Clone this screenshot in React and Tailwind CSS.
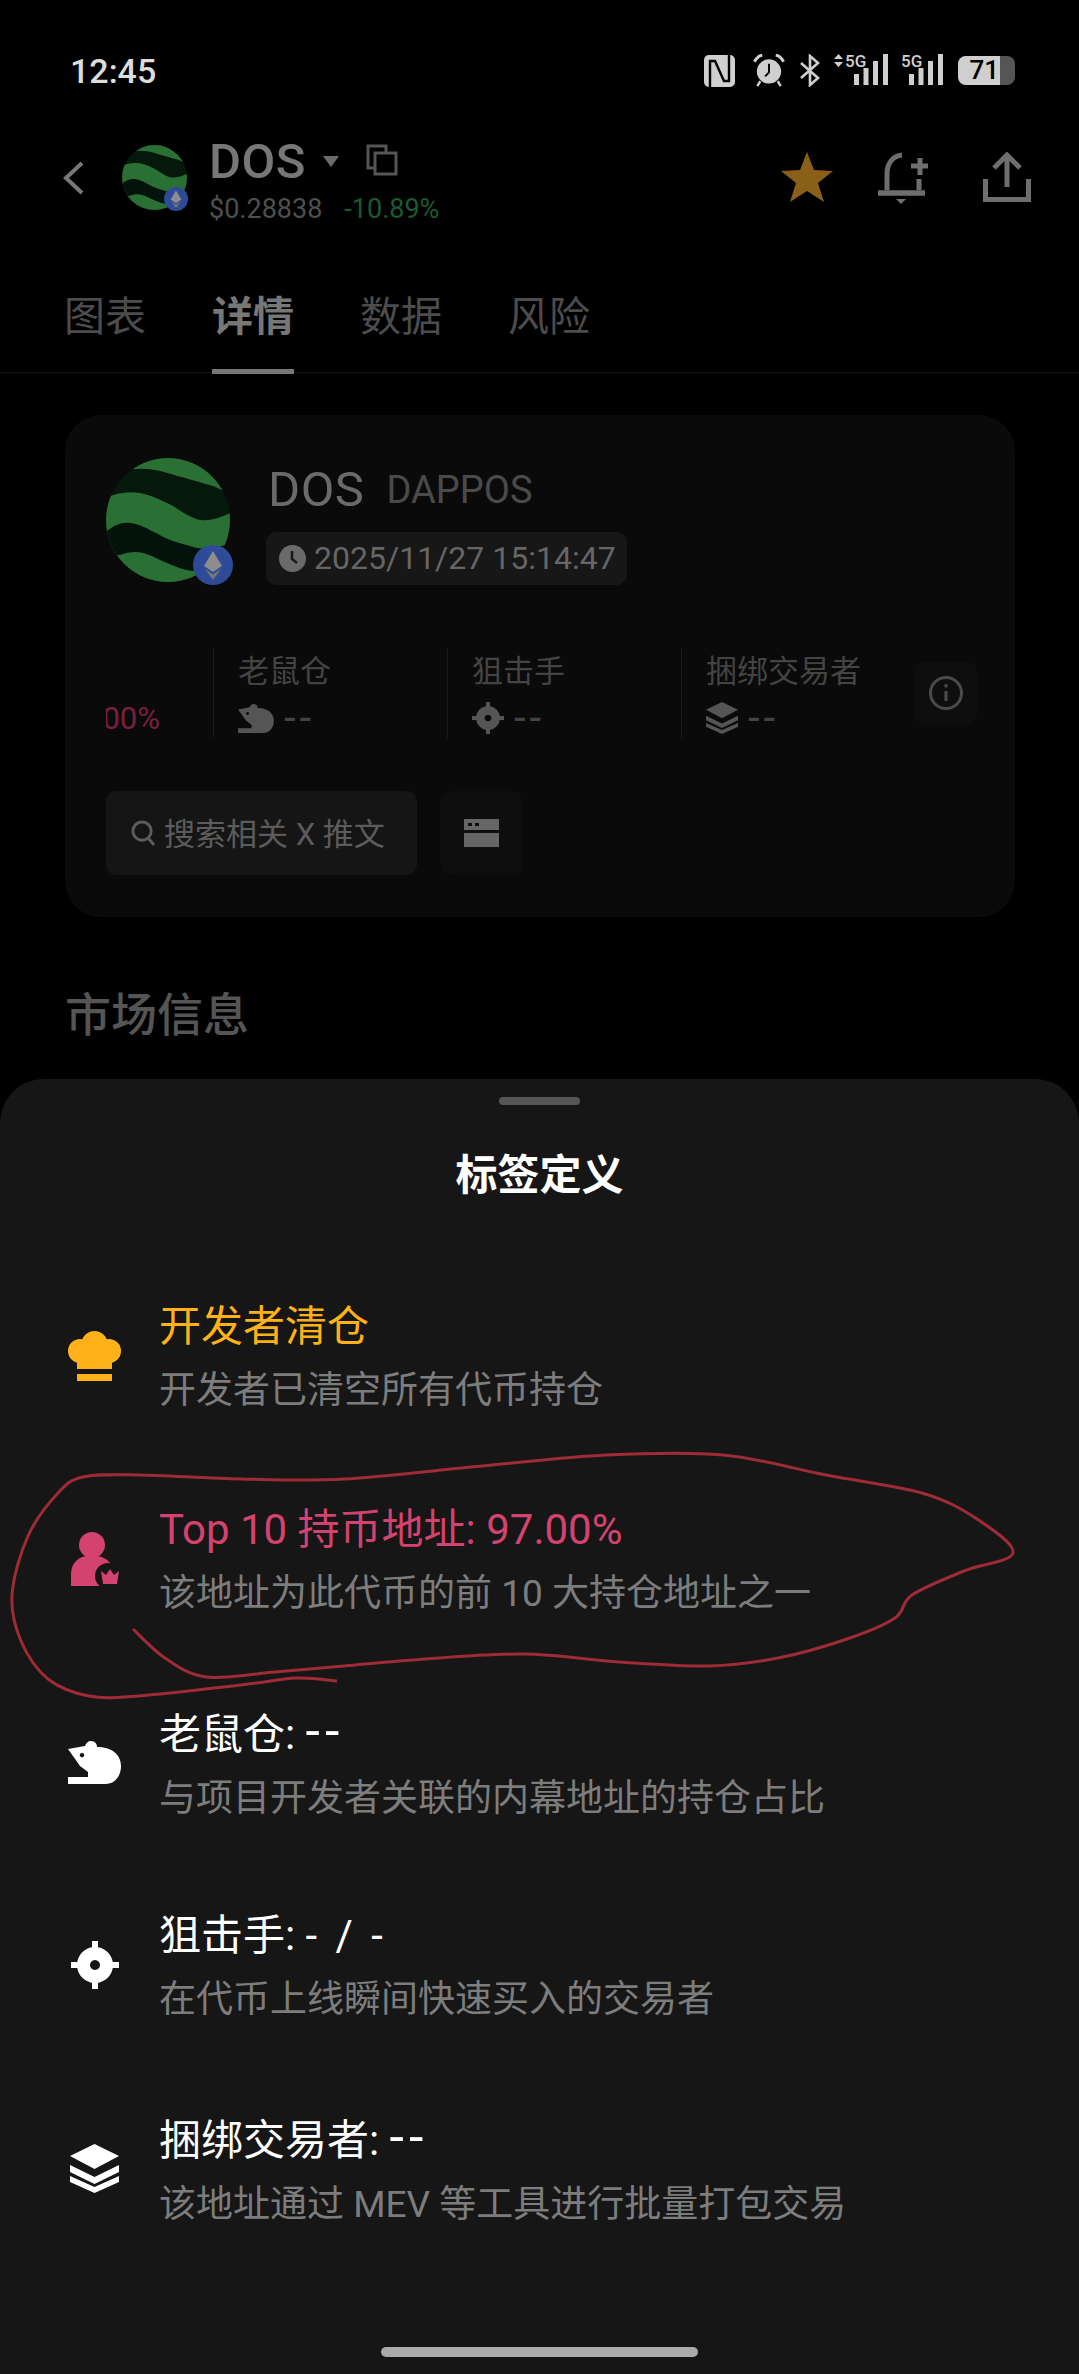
const font = { fontFamily: 'Roboto, "Noto Sans CJK SC", sans-serif' }

// the hand drawn red outline round the second row
const scribble = [
  [133, 1629], [165, 1658], [206, 1677], [275, 1672], [344, 1666], [413, 1660], [523, 1654], [619, 1662],
  [709, 1666], [778, 1658], [847, 1639], [895, 1618], [912, 1595], [964, 1571], [1013, 1553], [977, 1519],
  [922, 1493], [826, 1475], [723, 1455], [606, 1455], [482, 1466], [344, 1479], [241, 1479], [138, 1475],
  [83, 1477], [58, 1493], [28, 1536], [12, 1595], [21, 1641], [48, 1679], [89, 1696], [138, 1696],
  [241, 1685], [296, 1678], [337, 1681],
]

function smoothPath(pts) {
  let d = `M${pts[0][0]} ${pts[0][1]}`
  for (let i = 0; i < pts.length - 1; i++) {
    const p0 = pts[i - 1] || pts[i]
    const p1 = pts[i]
    const p2 = pts[i + 1]
    const p3 = pts[i + 2] || p2
    const c1 = [p1[0] + (p2[0] - p0[0]) / 6, p1[1] + (p2[1] - p0[1]) / 6]
    const c2 = [p2[0] - (p3[0] - p1[0]) / 6, p2[1] - (p3[1] - p1[1]) / 6]
    d += ` C${c1[0]} ${c1[1]} ${c2[0]} ${c2[1]} ${p2[0]} ${p2[1]}`
  }
  return d
}

function TokenLogo({ className }) {
  return (
    <svg viewBox="0 0 124 124" className={className}>
      <defs>
        <clipPath id="logo-clip"><circle cx="62" cy="62" r="62" /></clipPath>
      </defs>
      <g clipPath="url(#logo-clip)">
        <rect width="124" height="124" fill="#05180b" />
        <path d="M0 0H124V36C116 32 110 29 107 28C92 24 80 20 71 18C55 12 35 8 17 13L0 22Z" fill="#2a7034" />
        <path d="M0 40C10 35 22 33 34 35C46 37 57 43 67 48C76 54 85 60 94 62C104 63 114 60 124 55V124H0Z" fill="#2a7034" />
        <path d="M0 74C8 67 16 64 24 65C34 66 42 71 50 75C60 81 72 85 84 88C96 92 108 92 124 85V124H0Z" fill="#03120a" />
        <path d="M0 124V100C5 97 10 97 14 97C22 94 30 93 37 95C46 97 53 102 61 105C70 109 78 112 87 113C95 113 110 110 124 105V124Z" fill="#2a7034" />
      </g>
    </svg>
  )
}

function EthBadge({ className }) {
  return (
    <svg viewBox="0 0 40 40" className={className}>
      <circle cx="20" cy="20" r="20" fill="#2f4a96" />
      <path d="M20 6L29 21L20 27L11 21Z" fill="#8d8d8d" />
      <path d="M20 29.5L28 24L20 35L12 24Z" fill="#777" />
    </svg>
  )
}

function ChefIcon({ className }) {
  return (
    <svg viewBox="0 0 53 50" className={className} fill="currentColor">
      <circle cx="26.5" cy="13" r="13" />
      <circle cx="12" cy="20" r="12" />
      <circle cx="41" cy="20" r="12" />
      <rect x="9" y="14" width="35" height="24" />
      <rect x="9" y="43" width="35" height="7" />
    </svg>
  )
}

function PersonCrownIcon({ className }) {
  return (
    <svg viewBox="0 0 48 54" className={className} fill="currentColor">
      <circle cx="21" cy="13" r="13" />
      <path d="M0 54V42C0 31 8 24 17 24H24C31 24 36 27 40 32V54Z" />
      <circle cx="37" cy="44" r="13" fill="#161616" />
      <path d="M30 39L35 43L39 37L43 43L48 39L46 52H32Z" />
    </svg>
  )
}

function MouseIcon({ className }) {
  return (
    <svg viewBox="0 0 53 43" className={className} fill="currentColor">
      <path fillRule="evenodd" d="M0 8L17 5C18 2 20 0 23 0C27 0 29 3 29 6C43 6 53 13 53 25C53 36 46 43 38 43H0V36H20V31L12 25ZM14 12a2.2 2.2 0 1 0 0.01 0Z" />
    </svg>
  )
}

function TargetIcon({ className }) {
  return (
    <svg viewBox="0 0 48 48" className={className} fill="currentColor">
      <path fillRule="evenodd" d="M24 6a18 18 0 1 0 0.01 0ZM24 19a5 5 0 1 1-0.01 0Z" />
      <rect x="21" y="0" width="6" height="10" />
      <rect x="21" y="38" width="6" height="10" />
      <rect x="0" y="21" width="10" height="6" />
      <rect x="38" y="21" width="10" height="6" />
    </svg>
  )
}

function StackIcon({ className }) {
  return (
    <svg viewBox="0 0 49 49" className={className} fill="currentColor">
      <path d="M24.5 0L49 12L24.5 25L0 12Z" />
      <path d="M0 21L24.5 33L49 21V28L24.5 40L0 28Z" />
      <path d="M0 32L24.5 43L49 32V38L24.5 49L0 38Z" />
    </svg>
  )
}

function SignalBars({ className }) {
  return (
    <svg viewBox="0 0 34 31" className={className} fill="#cfcfcf">
      <rect x="0" y="20" width="5" height="11" />
      <rect x="9.5" y="14" width="5" height="17" />
      <rect x="19" y="7" width="5" height="24" />
      <rect x="29" y="0" width="5" height="31" />
    </svg>
  )
}

function StatusBar() {
  return (
    <div className="h-[142px] pt-[54px] pl-[70px] pr-[64px] flex justify-between items-start">
      <span className="text-[34px] leading-[34px] font-medium text-[#dcdcdc]">12:45</span>
      <div className="flex items-start h-[34px]">
        <svg viewBox="0 0 31 32" className="w-[31px] h-[32px] mt-[1px]">
          <rect width="31" height="32" rx="5" fill="#cfcfcf" />
          <path d="M6 32V6H11L20 26H25V0" stroke="#000" strokeWidth="2.4" fill="none" />
        </svg>
        <svg viewBox="0 0 32 34" className="w-[32px] h-[33px] ml-[18px]">
          <circle cx="16" cy="18" r="12.5" fill="#cfcfcf" />
          <path d="M16 10V19L12 23" stroke="#000" strokeWidth="2" fill="none" />
          <path d="M1 8C3 4 5 2 9 1M31 8C29 4 27 2 23 1" stroke="#cfcfcf" strokeWidth="3" fill="none" />
          <path d="M7 28L4 33M25 28L28 33" stroke="#cfcfcf" strokeWidth="2.5" />
        </svg>
        <svg viewBox="0 0 21 33" className="w-[21px] h-[33px] ml-[15px]">
          <path d="M1 9L18 24L10 31V2L18 9L1 24" stroke="#cfcfcf" strokeWidth="2.6" fill="none" />
        </svg>
        <div className="relative w-[54px] h-[32px] ml-[13px]">
          <svg viewBox="0 0 9 13" className="absolute left-0 top-0 w-[9px] h-[13px]" fill="#cfcfcf">
            <path d="M4.5 0L9 5H0ZM0 8H9L4.5 13Z" />
          </svg>
          <span className="absolute left-[11px] -top-[1px] text-[17px] leading-[16px] font-medium text-[#cfcfcf]">5G</span>
          <SignalBars className="absolute left-[20px] top-0 w-[34px] h-[31px]" />
        </div>
        <div className="relative w-[42px] h-[32px] ml-[13px]">
          <span className="absolute left-0 -top-[1px] text-[17px] leading-[16px] font-medium text-[#cfcfcf]">5G</span>
          <SignalBars className="absolute left-[8px] top-0 w-[34px] h-[31px]" />
        </div>
        <div className="w-[57px] h-[29px] ml-[15px] mt-[2px] rounded-[8px] overflow-hidden flex bg-[#555]">
          <div className="w-[42px] h-full bg-[#cfcfcf] flex justify-end items-center pr-[1px]">
            <span className="text-[26px] leading-[29px] font-medium text-black">71</span>
          </div>
        </div>
      </div>
    </div>
  )
}

function Header() {
  return (
    <div className="h-[150px] flex items-start pl-[63px] pr-[48px]">
      <svg viewBox="0 0 21 34" className="w-[21px] h-[34px] mt-[19px]">
        <path d="M19 2L3 17L19 32" stroke="#777" strokeWidth="4" fill="none" />
      </svg>
      <div className="relative w-[65px] h-[65px] ml-[38px] mt-[3px]">
        <TokenLogo className="w-[65px] h-[65px]" />
        <EthBadge className="absolute -right-[1px] -bottom-[1px] w-[24px] h-[24px]" />
      </div>
      <div className="ml-[22px]">
        <div className="flex items-center h-[46px] -mt-[3px]">
          <span className="text-[49px] leading-[46px] font-medium tracking-[0.5px] text-[#777]">DOS</span>
          <svg viewBox="0 0 16 11" className="w-[16px] h-[11px] ml-[17px] -mt-[2px]"><path d="M0 0H16L8 11Z" fill="#6c6c6c" /></svg>
          <svg viewBox="0 0 32 32" className="w-[32px] h-[32px] ml-[27px] -mt-[4px]" fill="none" stroke="#555" strokeWidth="3">
            <path d="M20 8V2H2V24H9" />
            <rect x="9" y="9" width="21" height="21" />
          </svg>
        </div>
        <div className="flex mt-[7px] text-[27px] leading-[34px]">
          <span className="text-[#4f4f4f]">$0.28838</span>
          <span className="ml-[22px] text-[#1b5a31]">-10.89%</span>
        </div>
      </div>
      <div className="ml-auto flex items-start mt-[10px]">
        <svg viewBox="0 0 52 50" className="w-[52px] h-[50px]"><path d="M26 0L33 18L52 19L37 31L43 50L26 39L9 50L15 31L0 19L19 18Z" fill="#8a5f17" /></svg>
        <svg viewBox="0 0 50 53" className="w-[50px] h-[53px] ml-[45px]" fill="none" stroke="#6e6e6e" strokeWidth="5">
          <path d="M9 38V22C9 11 15 4 24 3" />
          <path d="M41 27V38" />
          <path d="M0 41H47" strokeWidth="5.5" />
          <path d="M42 6V23M33 14H50" />
          <path d="M18 47H28L23 52Z" fill="#6e6e6e" stroke="none" />
        </svg>
        <svg viewBox="0 0 48 50" className="w-[48px] h-[50px] ml-[55px]" fill="none" stroke="#6e6e6e" strokeWidth="5">
          <path d="M24 3V35M11 16L24 3L37 16" />
          <path d="M2.500 27V47.500H45.500V27" />
        </svg>
      </div>
    </div>
  )
}

function Tabs() {
  const tabs = ['图表', '详情', '数据', '风险']
  return (
    <div className="h-[81px] flex gap-[66px] pl-[64px] border-b border-[#151515]">
      {tabs.map((t, i) => (
        <div key={t} className="relative h-[81px] pt-[2px]">
          <span className={`block text-[41px] leading-[46px] ${i === 1 ? 'font-bold text-[#777]' : 'text-[#4c4c4c]'}`}>{t}</span>
          {i === 1 && <div className="absolute left-0 right-0 -bottom-[1px] h-[5px] bg-[#777]" />}
        </div>
      ))}
    </div>
  )
}

function Stat({ label, icon }) {
  return (
    <div className="w-[234px] h-[90px] border-l border-[#1a1a1a] pl-[24px] pt-[5px]">
      <div className="text-[31px] leading-[38px] text-[#444]">{label}</div>
      <div className="flex items-center h-[30px] mt-[12px] text-[#555]">
        {icon}
        <span className="ml-[10px] text-[42px] leading-[30px] tracking-[4px] text-[#444]">--</span>
      </div>
    </div>
  )
}

function TokenCard() {
  return (
    <div className="w-[950px] h-[502px] mt-[42px] ml-[65px] rounded-[36px] bg-[#0a0a0a] pt-[43px] pl-[41px]">
      <div className="flex h-[127px]">
        <div className="relative w-[124px] h-[124px]">
          <TokenLogo className="w-[124px] h-[124px]" />
          <EthBadge className="absolute -right-[3px] -bottom-[3px] w-[40px] h-[40px]" />
        </div>
        <div className="ml-[36px] flex flex-col justify-end gap-[18px]">
          <div className="flex items-center h-[48px] pl-[2px]">
            <span className="text-[49px] leading-[48px] tracking-[0.5px] text-[#6a6a6a]">DOS</span>
            <span className="ml-[22px] text-[38px] leading-[48px] text-[#4a4a4a]">DAPPOS</span>
          </div>
          <div className="flex items-center h-[53px] w-[361px] rounded-[10px] bg-[#171717] pl-[13px]">
            <svg viewBox="0 0 27 27" className="w-[27px] h-[27px]">
              <circle cx="13.500" cy="13.500" r="13.500" fill="#6a6a6a" />
              <path d="M13 6V14L18 18" stroke="#181818" strokeWidth="2.500" fill="none" />
            </svg>
            <span className="ml-[8px] text-[32px] leading-[53px] text-[#666] whitespace-nowrap">2025/11/27 15:14:47</span>
          </div>
        </div>
      </div>

      <div className="flex items-start h-[90px] mt-[63px]">
        <div className="w-[107px] h-[90px] pr-[53px] pt-[54px] overflow-hidden flex justify-end whitespace-nowrap">
          <span className="text-[31px] leading-[34px] text-[#7a1f3d]">97.00%</span>
        </div>
        <Stat label="老鼠仓" icon={<MouseIcon className="w-[36px] h-[29px]" />} />
        <Stat label="狙击手" icon={<TargetIcon className="w-[32px] h-[32px]" />} />
        <Stat label="捆绑交易者" icon={<StackIcon className="w-[32px] h-[32px]" />} />
        <div className="w-[63px] h-[62px] mt-[14px] -ml-[1px] rounded-[10px] bg-[#0e0e0e] flex items-center justify-center">
          <svg viewBox="0 0 34 34" className="w-[34px] h-[34px]" fill="none" stroke="#4a4a4a" strokeWidth="3">
            <circle cx="17" cy="17" r="15.500" />
            <path d="M17 15V25" />
            <path d="M17 8V11.500" />
          </svg>
        </div>
      </div>

      <div className="flex h-[84px] mt-[53px]">
        <div className="w-[311px] h-[84px] rounded-[10px] bg-[#151515] flex items-center pl-[25px]">
          <svg viewBox="0 0 26 28" className="w-[25px] h-[27px]" fill="none" stroke="#5c5c5c" strokeWidth="3">
            <circle cx="11.500" cy="11.500" r="9.500" />
            <path d="M18 19L24 26" />
          </svg>
          <span className="ml-[8px] pt-[3px] text-[31px] leading-[81px] text-[#5c5c5c] whitespace-nowrap">搜索相关 X 推文</span>
        </div>
        <div className="w-[82px] h-[84px] ml-[23px] rounded-[10px] bg-[#0e0e0e] flex items-center justify-center">
          <svg viewBox="0 0 35 28" className="w-[35px] h-[28px]">
            <path fillRule="evenodd" d="M0 0H35V11H0ZM4 4V7H8V4ZM11 4V7H15V4Z" fill="#666" />
            <rect y="14" width="35" height="14" fill="#666" />
          </svg>
        </div>
      </div>
    </div>
  )
}

const rows = [
  { title: '开发者清仓', desc: '开发者已清空所有代币持仓', color: 'text-[#ffb11a]', icon: <ChefIcon className="w-[53px] h-[50px]" /> },
  { title: 'Top 10 持币地址: 97.00%', desc: '该地址为此代币的前 10 大持仓地址之一', color: 'text-[#d4436f]', icon: <PersonCrownIcon className="w-[48px] h-[54px] ml-[3px]" /> },
  { title: '老鼠仓: ', value: '--', valueClass: 'text-[52px] tracking-[5px]', desc: '与项目开发者关联的内幕地址的持仓占比', color: 'text-white', icon: <MouseIcon className="w-[53px] h-[43px]" /> },
  { title: '狙击手: ', value: '- / -', valueClass: 'tracking-[4px]', desc: '在代币上线瞬间快速买入的交易者', color: 'text-white', icon: <TargetIcon className="w-[48px] h-[48px] ml-[3px]" /> },
  { title: '捆绑交易者: ', value: '--', valueClass: 'text-[52px] tracking-[5px]', desc: '该地址通过 MEV 等工具进行批量打包交易', color: 'text-white', icon: <StackIcon className="w-[49px] h-[49px] ml-[2px]" /> },
]

function Sheet() {
  return (
    <div className="h-[1295px] rounded-t-[44px] bg-[#161616] flex flex-col">
      <div className="w-[81px] h-[8px] mt-[18px] rounded-full bg-[#555] self-center" />
      <div className="mt-[47px] text-center text-[42px] leading-[48px] font-bold text-white">标签定义</div>
      <div className="mt-[102px] flex flex-col gap-[92px] pl-[68px]">
        {rows.map(r => (
          <div key={r.title} className={`flex items-center h-[111px] ${r.color}`}>
            <div className="w-[91px] -mt-[3px] flex items-center">{r.icon}</div>
            <div>
              <div className="text-[42px] leading-[50px] whitespace-pre">
                {r.title}
                {r.value && <span className={r.valueClass}>{r.value}</span>}
              </div>
              <div className="mt-[17px] text-[37px] leading-[44px] text-[#7d7d7d]">{r.desc}</div>
            </div>
          </div>
        ))}
      </div>
      <div className="w-[317px] h-[10px] mt-auto mb-[17px] rounded-full bg-[#aaa] self-center" />
    </div>
  )
}

export default function App() {
  return (
    <div className="relative w-[1079px] h-[2374px] bg-black overflow-hidden" style={font}>
      <div className="h-[1079px]">
        <StatusBar />
        <Header />
        <Tabs />
        <TokenCard />
        <div className="mt-[73px] ml-[65px] text-[46px] leading-[50px] font-medium text-[#555]">市场信息</div>
      </div>
      <Sheet />
      <svg viewBox="0 0 1079 2374" className="absolute inset-0 w-[1079px] h-[2374px] pointer-events-none">
        <path d={smoothPath(scribble)} fill="none" stroke="#9e2b35" strokeWidth="3" />
      </svg>
    </div>
  )
}
